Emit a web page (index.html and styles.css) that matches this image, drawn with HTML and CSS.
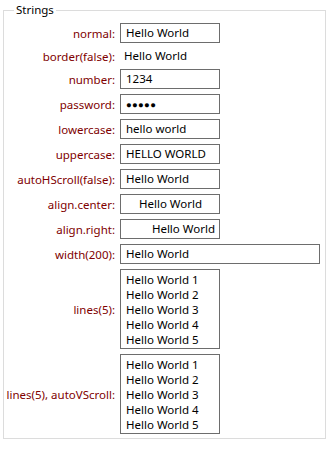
FILE: index.html
```html
<!DOCTYPE html>
<html lang="en">

<head>
    <meta charset="UTF-8" />
    <title>Strings</title>
    <link rel="stylesheet" href="styles.css">
</head>

<body>
    <fieldset class="group">
        <legend>Strings</legend>
        <div class="form">
            <label>normal:</label>
            <div class="field">Hello World</div>

            <label class="short">border(false):</label>
            <div class="plain">Hello World</div>

            <label>number:</label>
            <div class="field">1234</div>

            <label>password:</label>
            <div class="field dots">●●●●●</div>

            <label>lowercase:</label>
            <div class="field">hello world</div>

            <label>uppercase:</label>
            <div class="field">HELLO WORLD</div>

            <label>autoHScroll(false):</label>
            <div class="field">Hello World</div>

            <label>align.center:</label>
            <div class="field center">Hello World</div>

            <label>align.right:</label>
            <div class="field right">Hello World</div>

            <label>width(200):</label>
            <div class="field wide">Hello World</div>

            <label>lines(5):</label>
            <div class="field multi">Hello World 1<br>Hello World 2<br>Hello World 3<br>Hello World 4<br>Hello World 5</div>

            <label>lines(5), autoVScroll:</label>
            <div class="field multi">Hello World 1<br>Hello World 2<br>Hello World 3<br>Hello World 4<br>Hello World 5</div>
        </div>
    </fieldset>
</body>

</html>
```

FILE: styles.css
```css
body {
    font-family: "Noto Sans", "Open Sans", sans-serif;
    font-size: 11.5px;
    line-height: 15px;
    margin: 0;
    padding: 0;
    background-color: #fff;
    color: #000;
}

.group {
    margin: 2px 0 0 3px;
    width: 323px;
    box-sizing: border-box;
    height: 437px;
    border: 1px solid #dcdcdc;
    padding: 5px 5px 3px 4px;
}

.group legend {
    padding: 0 2px;
    margin-left: 6px;
    line-height: 16px;
}

.form {
    display: grid;
    grid-template-columns: 107px auto;
    column-gap: 5px;
    row-gap: 5px;
    align-items: center;
    justify-items: start;
}

.form label {
    justify-self: end;
    color: #800000;
    white-space: nowrap;
}

.field {
    box-sizing: border-box;
    width: 100px;
    height: 20px;
    border: 1px solid #6d6d6d;
    padding: 1px 4px 0 5px;
    white-space: nowrap;
    overflow: hidden;
}

.plain {
    height: 16px;
    padding-left: 4px;
}

.dots {
    font-size: 9.5px;
    letter-spacing: 0.3px;
    line-height: 17px;
}

.center {
    text-align: center;
}

.right {
    text-align: right;
}

.wide {
    width: 200px;
}

.multi {
    height: 80px;
    padding-top: 2px;
}
```
